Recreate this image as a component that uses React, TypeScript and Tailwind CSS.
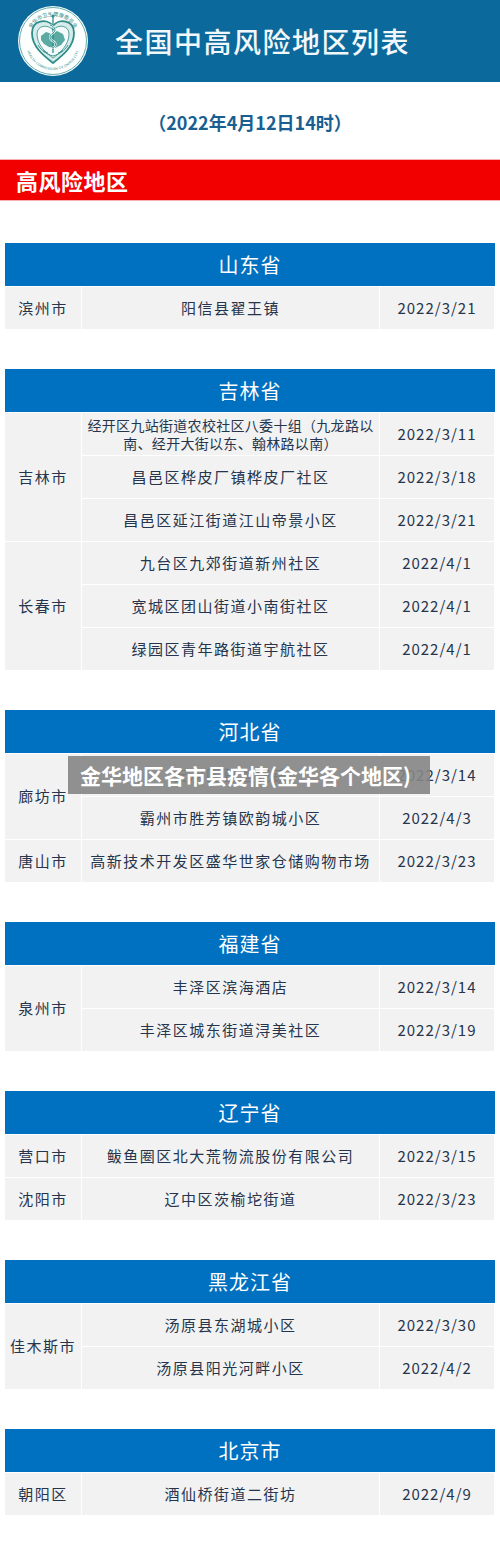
import React from 'react'

type Place = { area: string; date: string; small?: boolean }
type City = { city: string; places: Place[] }
type Province = { name: string; cities: City[] }

const PROVINCES: Province[] = [
  { name: '山东省', cities: [{ city: '滨州市', places: [{ area: '阳信县翟王镇', date: '2022/3/21' }] }] },
  {
    name: '吉林省',
    cities: [
      {
        city: '吉林市',
        places: [
          { area: '经开区九站街道农校社区八委十组（九龙路以南、经开大街以东、翰林路以南）', date: '2022/3/11', small: true },
          { area: '昌邑区桦皮厂镇桦皮厂社区', date: '2022/3/18' },
          { area: '昌邑区延江街道江山帝景小区', date: '2022/3/21' },
        ],
      },
      {
        city: '长春市',
        places: [
          { area: '九台区九郊街道新州社区', date: '2022/4/1' },
          { area: '宽城区团山街道小南街社区', date: '2022/4/1' },
          { area: '绿园区青年路街道宇航社区', date: '2022/4/1' },
        ],
      },
    ],
  },
  {
    name: '河北省',
    cities: [
      {
        city: '廊坊市',
        places: [
          { area: '安次区葛渔城镇', date: '2022/3/14' },
          { area: '霸州市胜芳镇欧韵城小区', date: '2022/4/3' },
        ],
      },
      { city: '唐山市', places: [{ area: '高新技术开发区盛华世家仓储购物市场', date: '2022/3/23' }] },
    ],
  },
  {
    name: '福建省',
    cities: [
      {
        city: '泉州市',
        places: [
          { area: '丰泽区滨海酒店', date: '2022/3/14' },
          { area: '丰泽区城东街道浔美社区', date: '2022/3/19' },
        ],
      },
    ],
  },
  {
    name: '辽宁省',
    cities: [
      { city: '营口市', places: [{ area: '鲅鱼圈区北大荒物流股份有限公司', date: '2022/3/15' }] },
      { city: '沈阳市', places: [{ area: '辽中区茨榆坨街道', date: '2022/3/23' }] },
    ],
  },
  {
    name: '黑龙江省',
    cities: [
      {
        city: '佳木斯市',
        places: [
          { area: '汤原县东湖城小区', date: '2022/3/30' },
          { area: '汤原县阳光河畔小区', date: '2022/4/2' },
        ],
      },
    ],
  },
  { name: '北京市', cities: [{ city: '朝阳区', places: [{ area: '酒仙桥街道二街坊', date: '2022/4/9' }] }] },
]

const SPAN: Record<number, string> = { 1: 'row-span-1', 2: 'row-span-2', 3: 'row-span-3' }

const FONT = "font-['Noto_Sans_CJK_SC','Noto_Sans',sans-serif]"

function Logo() {
  return (
    <svg width="72" height="72" viewBox="0 0 72 72">
      <defs>
        <path id="ringTop" d="M11 36 A25 25 0 0 1 61 36" />
        <path id="ringBottom" d="M9 38 A27 27 0 0 0 63 38" />
      </defs>
      <circle cx="36" cy="36" r="35" fill="#fdfefe" />
      <circle cx="36" cy="36" r="33.5" fill="none" stroke="#3d9a96" strokeWidth="0.8" />
      <text fontSize="5.2" fill="#2f8d89" fontFamily="'Noto Sans CJK SC',sans-serif">
        <textPath href="#ringTop" startOffset="50%" textAnchor="middle">金华市卫生健康委员会</textPath>
      </text>
      <text fontSize="3.4" fill="#2f8d89" fontFamily="'Noto Sans',sans-serif" letterSpacing="0.2">
        <textPath href="#ringBottom" startOffset="50%" textAnchor="middle">HEALTH COMMISSION OF JINHUA CITY</textPath>
      </text>
      {/* heart shaped shield */}
      <path
        d="M36 21 C30 13 15 15 15 28 C15 42 27 51 36 58 C45 51 57 42 57 28 C57 15 42 13 36 21 Z"
        fill="#d7ecea"
        stroke="#2f8d89"
        strokeWidth="1.8"
      />
      <path
        d="M36 25 C31 19 20 20 20 29 C20 40 29 48 36 53 C43 48 52 40 52 29 C52 20 41 19 36 25 Z"
        fill="#f4faf9"
        stroke="#2f8d89"
        strokeWidth="0.8"
      />
      {/* map blob */}
      <path d="M24 31 L29 27 L35 29 L40 26 L46 29 L48 35 L44 40 L38 43 L32 42 L27 39 L24 35 Z" fill="#5aa9a3" />
      {/* staff and snake */}
      <line x1="36" y1="11" x2="36" y2="48" stroke="#2f8d89" strokeWidth="1.3" />
      <circle cx="36" cy="11" r="1.6" fill="#2f8d89" />
      <path d="M33 20 C39 22 39 26 36 28 C32 30 32 34 36 36 C40 38 39 42 35 43" fill="none" stroke="#ffffff" strokeWidth="2" />
      <path d="M33 20 C39 22 39 26 36 28 C32 30 32 34 36 36 C40 38 39 42 35 43" fill="none" stroke="#2f8d89" strokeWidth="1" />
      {/* wheat leaves */}
      <path d="M21 40 C23 44 27 47 31 48" fill="none" stroke="#2f8d89" strokeWidth="0.9" />
      <path d="M51 40 C49 44 45 47 41 48" fill="none" stroke="#2f8d89" strokeWidth="0.9" />
      <path d="M26 46 C29 48 32 50 36 51 C40 50 43 48 46 46" fill="none" stroke="#2f8d89" strokeWidth="0.9" />
    </svg>
  )
}

function ProvinceTable({ p }: { p: Province }) {
  return (
    <section className="mx-[5px] mt-[40px] first:mt-[42px]">
      <div className="h-[43px] bg-[#0070c0] flex items-center justify-center text-[20px] tracking-[1px] text-white">
        {p.name}
      </div>
      <div className="grid grid-cols-[76px_297px_114px] auto-rows-[42px] gap-px bg-white pt-px">
        {p.cities.map(c => (
          <React.Fragment key={c.city}>
            <div className={`${SPAN[c.places.length]} col-start-1 bg-[#f2f2f2] flex items-center justify-center text-[15px] tracking-[1.5px] text-[#25354d]`}>
              {c.city}
            </div>
            {c.places.map(pl => (
              <React.Fragment key={pl.area}>
                <div
                  className={`col-start-2 bg-[#f2f2f2] flex items-center justify-center text-center text-[#25354d] ${
                    pl.small ? 'text-[14px] leading-[18px] tracking-[0.3px] px-[3px]' : 'text-[15px] tracking-[1.5px]'
                  }`}
                >
                  {pl.area}
                </div>
                <div className="col-start-3 bg-[#f2f2f2] flex items-center justify-center text-[15px] tracking-[1px] text-[#25354d]">
                  {pl.date}
                </div>
              </React.Fragment>
            ))}
          </React.Fragment>
        ))}
      </div>
    </section>
  )
}

export default function App() {
  return (
    <div className={`relative w-[500px] min-h-[1552px] bg-white ${FONT}`}>
      {/* Banner */}
      <div className="h-[82px] bg-[#0c699c] flex items-center pl-[17px]">
        <Logo />
        <h1 className="ml-[26px] text-[28px] font-medium tracking-[1.5px] text-[#f1f7fa]">全国中高风险地区列表</h1>
      </div>

      <div className="h-[77px] flex items-center justify-center pt-[4px]">
        <p className="text-[18px] font-bold text-[#1a5f91]">（2022年4月12日14时）</p>
      </div>

      <div className="h-[42px] bg-[#f20000] flex items-center pl-[16px] border-y border-[#f6b0b0]">
        <span className="text-[22px] font-bold tracking-[0.5px] text-white">高风险地区</span>
      </div>

      <div className="pb-[34px]">
        {PROVINCES.map(p => (
          <ProvinceTable key={p.name} p={p} />
        ))}
      </div>

      {/* watermark caption */}
      <div className="absolute left-[68px] top-[756px] w-[362px] h-[38px] bg-[#858585]/90 flex items-center pl-[12px]">
        <span className="text-[21px] font-bold text-white leading-none">金华地区各市县疫情(金华各个地区)</span>
      </div>
    </div>
  )
}
